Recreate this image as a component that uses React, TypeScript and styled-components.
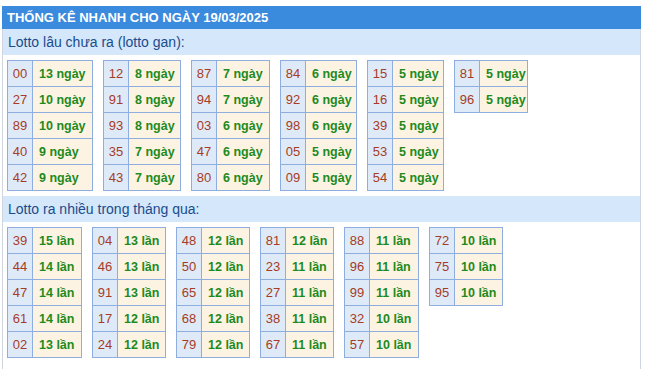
import React from "react";
import styled, { createGlobalStyle } from "styled-components";

const GlobalStyle = createGlobalStyle`
  body {
    margin: 0;
    background: #ffffff;
    font-family: "Liberation Sans", Arial, "Noto Sans", sans-serif;
  }
`;

type Entry = [string, string];
type Column = { width: number; rows: Entry[] };

// lotto gan
const ganColumns: Column[] = [
  { width: 60, rows: [["00", "13 ngày"], ["27", "10 ngày"], ["89", "10 ngày"], ["40", "9 ngày"], ["42", "9 ngày"]] },
  { width: 52, rows: [["12", "8 ngày"], ["91", "8 ngày"], ["93", "8 ngày"], ["35", "7 ngày"], ["43", "7 ngày"]] },
  { width: 53, rows: [["87", "7 ngày"], ["94", "7 ngày"], ["03", "6 ngày"], ["47", "6 ngày"], ["80", "6 ngày"]] },
  { width: 51, rows: [["84", "6 ngày"], ["92", "6 ngày"], ["98", "6 ngày"], ["05", "5 ngày"], ["09", "5 ngày"]] },
  { width: 51, rows: [["15", "5 ngày"], ["16", "5 ngày"], ["39", "5 ngày"], ["53", "5 ngày"], ["54", "5 ngày"]] },
  { width: 48, rows: [["81", "5 ngày"], ["96", "5 ngày"]] },
];

// lotto ra nhiều
const hotColumns: Column[] = [
  { width: 49, rows: [["39", "15 lần"], ["44", "14 lần"], ["47", "14 lần"], ["61", "14 lần"], ["02", "13 lần"]] },
  { width: 48, rows: [["04", "13 lần"], ["46", "13 lần"], ["91", "13 lần"], ["17", "12 lần"], ["24", "12 lần"]] },
  { width: 48, rows: [["48", "12 lần"], ["50", "12 lần"], ["65", "12 lần"], ["68", "12 lần"], ["79", "12 lần"]] },
  { width: 48, rows: [["81", "12 lần"], ["23", "11 lần"], ["27", "11 lần"], ["38", "11 lần"], ["67", "11 lần"]] },
  { width: 49, rows: [["88", "11 lần"], ["96", "11 lần"], ["99", "11 lần"], ["32", "10 lần"], ["57", "10 lần"]] },
  { width: 48, rows: [["72", "10 lần"], ["75", "10 lần"], ["95", "10 lần"]] },
];

type SectionProps = {
  title: string;
  columns: Column[];
};

const Section = ({ title, columns }: SectionProps) => (
  <>
    <SubTitle>{title}</SubTitle>
    <TableRow>
      {columns.map((col, i) => (
        <NumTable key={i} $w={col.width}>
          <colgroup>
            <col style={{ width: 25 }} />
            <col style={{ width: col.width }} />
          </colgroup>
          <tbody>
            {col.rows.map(([num, val]) => (
              <tr key={num}>
                <NumCell>{num}</NumCell>
                <ValueCell>{val}</ValueCell>
              </tr>
            ))}
          </tbody>
        </NumTable>
      ))}
    </TableRow>
  </>
);

const App = () => {
  return (
    <>
      <GlobalStyle />
      <Box>
        <Header>THỐNG KÊ NHANH CHO NGÀY 19/03/2025</Header>
        <Section title="Lotto lâu chưa ra (lotto gan):" columns={ganColumns} />
        <Section title="Lotto ra nhiều trong tháng qua:" columns={hotColumns} />
      </Box>
    </>
  );
};

export default App;

const Box = styled.div`
  margin: 6px 0 0 2px;
  width: 639px;
  box-sizing: border-box;
  border-left: 1px solid #cfd6df;
  border-right: 1px solid #cfd6df;
  padding-bottom: 6px;
`;

const Header = styled.div`
  height: 23px;
  margin: 0 -1px;
  padding: 0 5px;
  display: flex;
  align-items: center;
  background: #3a8ade;
  color: #ffffff;
  font-size: 13px;
  font-weight: bold;
`;

const SubTitle = styled.div`
  height: 26px;
  padding: 0 5px;
  display: flex;
  align-items: center;
  background: #d5e7fa;
  color: #1a4c8c;
  font-size: 14px;
`;

const TableRow = styled.div`
  display: flex;
  align-items: flex-start;
  gap: 10px;
  padding: 5px 4px;
`;

const NumTable = styled.table<{ $w: number }>`
  table-layout: fixed;
  width: ${(p) => 25 + p.$w}px;
  flex: none;
  border-collapse: collapse;
  border: 1px solid #8daede;
  font-size: 13px;
`;

const NumCell = styled.td`
  height: 25px;
  padding: 0;
  border: 1px solid #8daede;
  background: #dfeaf8;
  color: #a53c26;
  text-align: center;
`;

const ValueCell = styled.td`
  height: 25px;
  padding: 0 0 0 6px;
  border: 1px solid #8daede;
  background: #fdf3e3;
  color: #1e8a1e;
  font-size: 12.5px;
  font-weight: bold;
  white-space: nowrap;
`;
